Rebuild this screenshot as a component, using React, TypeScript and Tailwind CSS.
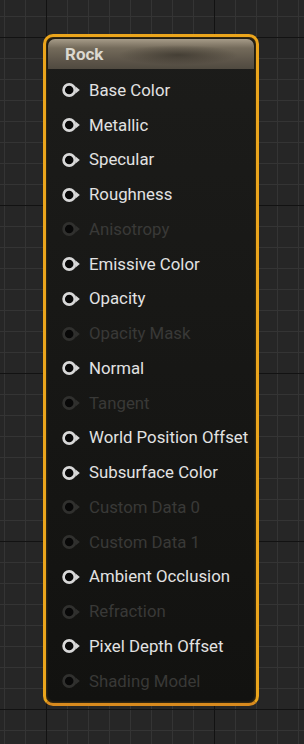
const pins = [
	{ name: 'Base Color', on: true },
	{ name: 'Metallic', on: true },
	{ name: 'Specular', on: true },
	{ name: 'Roughness', on: true },
	{ name: 'Anisotropy', on: false },
	{ name: 'Emissive Color', on: true },
	{ name: 'Opacity', on: true },
	{ name: 'Opacity Mask', on: false },
	{ name: 'Normal', on: true },
	{ name: 'Tangent', on: false },
	{ name: 'World Position Offset', on: true },
	{ name: 'Subsurface Color', on: true },
	{ name: 'Custom Data 0', on: false },
	{ name: 'Custom Data 1', on: false },
	{ name: 'Ambient Occlusion', on: true },
	{ name: 'Refraction', on: false },
	{ name: 'Pixel Depth Offset', on: true },
	{ name: 'Shading Model', on: false },
];

const PinIcon = ({ on }: { on: boolean }) => {
	const stroke = on ? '#d8d8d8' : '#30302e';
	return (
		<svg width="19" height="16" viewBox="0 0 19 16" className="shrink-0">
			<path d="M13.4 4.2 L17.8 8 L13.4 11.8 Z" fill={stroke} />
			<circle cx="7.2" cy="8" r="5.6" fill="#080808" stroke={stroke} strokeWidth="2.7" />
		</svg>
	);
};

const App = () => {
	return (
		<div
			className="w-[304px] h-[744px] overflow-hidden bg-[#262626] pt-[34px] pl-[43px] bg-[image:linear-gradient(to_right,#121212_1px,transparent_1px),linear-gradient(to_bottom,#121212_1px,transparent_1px),linear-gradient(to_right,#343434_1px,transparent_1px),linear-gradient(to_bottom,#343434_1px,transparent_1px)] bg-[size:168px_168px,168px_168px,21px_21px,21px_21px] bg-[position:46px_0,0_37px,4px_0,0_16px]"
			style={{ fontFamily: 'Roboto, "Noto Sans", sans-serif' }}>
			<div className="w-[216px] h-[672px] rounded-[10px] border-[3px] border-[#eba51c] border-b-[#d88a1e] bg-[#141412] p-[2px] shadow-[inset_0_0_3px_#6a4a10]">
				<div className="h-full rounded-[7px] overflow-hidden flex flex-col bg-[linear-gradient(to_bottom,#1c1c1a,#121210)]">
					<div className="h-[30px] shrink-0 flex items-center pl-[17px] bg-[radial-gradient(ellipse_60px_10px_at_130px_16px,rgba(40,36,30,0.55),transparent),linear-gradient(to_bottom,#a69b88,#746b5b_30%,#5e564a_70%,#504a40)]">
						<span className="text-[17px] font-bold text-[#dcd8cf] leading-none">Rock</span>
					</div>
					<div className="flex flex-col pt-[4px]">
						{pins.map((pin) => (
							<div key={pin.name} className="h-[34.75px] flex items-center pl-[14px] gap-[8px]">
								<PinIcon on={pin.on} />
								<span
									className={`text-[16.8px] leading-none whitespace-nowrap ${
										pin.on ? 'text-[#e2e2e2]' : 'text-[#393937]'
									}`}>
									{pin.name}
								</span>
							</div>
						))}
					</div>
				</div>
			</div>
		</div>
	);
};

export default App;
